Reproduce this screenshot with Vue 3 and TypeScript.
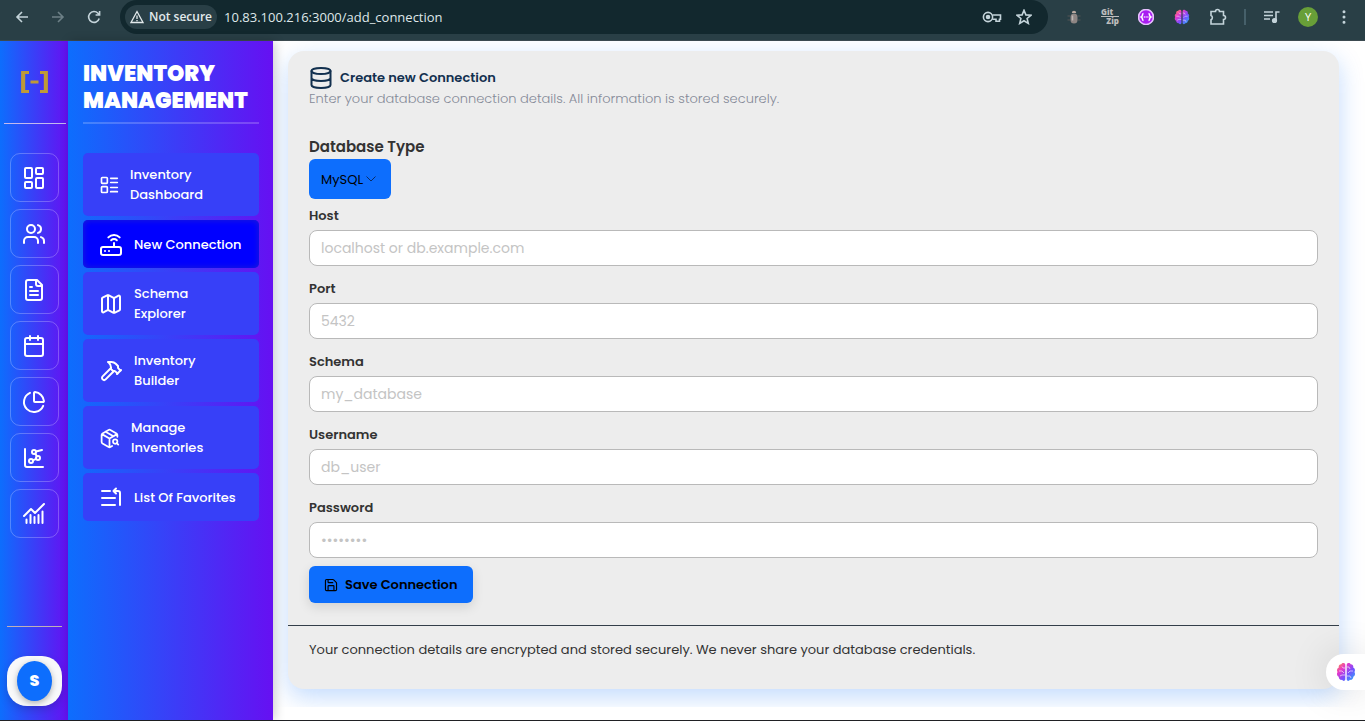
<script setup lang="ts">
import { ref } from 'vue'

interface NavItem {
  lines: string[]
  icon: string
  size: number
  active?: boolean
}

interface Field {
  id: string
  label: string
  placeholder: string
  type: string
}

const address = ref('10.83.100.216:3000/add_connection')
const dbType = ref('MySQL')

const rail: { label: string; icon: string }[] = [
  {
    label: 'Dashboard',
    icon: '<rect x="3" y="2" width="7" height="10" rx="1"/><rect x="14" y="2" width="7" height="6" rx="1"/><rect x="14" y="12" width="7" height="10" rx="1"/><rect x="3" y="16" width="7" height="6" rx="1"/>',
  },
  {
    label: 'Users',
    icon: '<path d="M16 21v-2a4 4 0 0 0-4-4H6a4 4 0 0 0-4 4v2"/><circle cx="9" cy="7" r="4"/><path d="M22 21v-2a4 4 0 0 0-3-3.87M16 3.13a4 4 0 0 1 0 7.75"/>',
  },
  {
    label: 'Documents',
    icon: '<path d="M15 2H6a2 2 0 0 0-2 2v16a2 2 0 0 0 2 2h12a2 2 0 0 0 2-2V7Z"/><path d="M14 2v4a2 2 0 0 0 2 2h4M10 9H8M16 13H8M16 17H8"/>',
  },
  {
    label: 'Calendar',
    icon: '<rect x="3" y="4" width="18" height="18" rx="2"/><path d="M16 2v4M8 2v4M3 10h18"/>',
  },
  {
    label: 'Reports',
    icon: '<path d="M21 12c.55 0 1-.45.95-1a10 10 0 0 0-8.95-8.95c-.55-.05-1 .4-1 .95v8a1 1 0 0 0 1 1z"/><path d="M21.2 15.9A10 10 0 1 1 8 2.83"/>',
  },
  {
    label: 'Network chart',
    icon: '<path d="M3 3v16a2 2 0 0 0 2 2h16"/><circle cx="12" cy="6" r="2"/><circle cx="16" cy="12" r="2"/><circle cx="9" cy="15" r="2"/><path d="m14 5.500 6-1.500M13.200 7.600l1.700 2.700M10.900 14.300l3.200-1.400"/>',
  },
  {
    label: 'Analytics',
    icon: '<path d="m2 14 7-7 4 4 9-9M4.500 21v-3.500M8.500 21v-8M12.500 21v-6M16.500 21v-8M20.500 21V9.500"/>',
  },
]

const nav: NavItem[] = [
  {
    lines: ['Inventory', 'Dashboard'],
    size: 20,
    icon: '<rect x="3" y="3" width="7" height="7" rx="1"/><rect x="3" y="14" width="7" height="7" rx="1"/><path d="M14 4h8M14 9h8M14 15h8M14 20h8"/>',
  },
  {
    lines: ['New Connection'],
    size: 24,
    active: true,
    icon: '<rect x="2" y="14" width="20" height="8" rx="2"/><path d="M6 18h.01M10 18h.01M15 10v4M17.84 7.17a4 4 0 0 0-5.66 0M20.66 4.34a8 8 0 0 0-11.31 0"/>',
  },
  {
    lines: ['Schema', 'Explorer'],
    size: 24,
    icon: '<path d="M14.1 5.55a2 2 0 0 0 1.8 0l3.65-1.83A1 1 0 0 1 21 4.62v12.76a1 1 0 0 1-.55.9l-4.55 2.27a2 2 0 0 1-1.8 0l-4.2-2.1a2 2 0 0 0-1.8 0l-3.65 1.83A1 1 0 0 1 3 19.38V6.62a1 1 0 0 1 .55-.9l4.55-2.27a2 2 0 0 1 1.8 0zM15 5.76v15M9 3.24v15"/>',
  },
  {
    lines: ['Inventory', 'Builder'],
    size: 24,
    icon: '<path d="m15 12-8.37 8.37a1 1 0 1 1-3-3L12 9"/><path d="m18 15 4-4"/><path d="m21.5 11.5-1.91-1.91A2 2 0 0 1 19 8.17V7l-2.26-2.26a6 6 0 0 0-4.2-1.76L9 2.96l.92.82A6.18 6.18 0 0 1 12 8.4V10l2 2h1.17a2 2 0 0 1 1.42.59L18.5 14.5"/>',
  },
  {
    lines: ['Manage', 'Inventories'],
    size: 21,
    icon: '<path d="M21 10V8a2 2 0 0 0-1-1.73l-7-4a2 2 0 0 0-2 0l-7 4A2 2 0 0 0 3 8v8a2 2 0 0 0 1 1.73l7 4a2 2 0 0 0 2 0l2-1.14M7.5 4.27l9 5.15M3.29 7 12 12l8.71-5M12 22V12"/><circle cx="18.5" cy="15.5" r="2.5"/><path d="M20.27 17.27 22 19"/>',
  },
  {
    lines: ['List Of Favorites'],
    size: 24,
    icon: '<path d="M3 5h8M3 12h13M3 19h13M21 19V7a2 2 0 0 0-2-2h-4M17 2.500l-2.500 2.500 2.500 2.500"/>',
  },
]

const fields: Field[] = [
  { id: 'host', label: 'Host', placeholder: 'localhost or db.example.com', type: 'text' },
  { id: 'port', label: 'Port', placeholder: '5432', type: 'text' },
  { id: 'schema', label: 'Schema', placeholder: 'my_database', type: 'text' },
  { id: 'username', label: 'Username', placeholder: 'db_user', type: 'text' },
  { id: 'password', label: 'Password', placeholder: '••••••••', type: 'password' },
]
</script>

<template>
  <div class="window">
    <svg class="defs" width="0" height="0" aria-hidden="true">
      <defs>
        <linearGradient id="brainFill" x1="0" y1="0" x2="1" y2="1">
          <stop offset="0" stop-color="#ff9a3c" />
          <stop offset="0.3" stop-color="#e838c8" />
          <stop offset="0.6" stop-color="#7a4dff" />
          <stop offset="1" stop-color="#22b4f5" />
        </linearGradient>
        <symbol id="brain" viewBox="0 0 20 20">
          <path
            fill="url(#brainFill)"
            d="M9.300 2.500C8.600.6 6 .6 5.300 2.300 3.300 2.300 2.300 4 2.800 5.600 1 6.500.5 8.500 1.500 10 .4 11.800 1 14 2.700 14.700 2.600 17 4.500 18.200 6 17.800 7 19.500 9 19.200 9.300 17.500Zm1.400 0C11.400.6 14 .6 14.700 2.300 16.700 2.300 17.700 4 17.200 5.600 19 6.500 19.500 8.500 18.500 10 19.600 11.800 19 14 17.300 14.700 17.400 17 15.500 18.200 14 17.800 13 19.500 11 19.200 10.700 17.500Z"
          />
          <path
            fill="none"
            stroke="#fff"
            stroke-opacity="0.6"
            stroke-width="1"
            d="M9 6H7L6 4.500M3 9h3l2 2M4 14l2-1h3M11 5h2l1 2M17 9h-3l-2 2M11 14h3l1 2"
          />
        </symbol>
      </defs>
    </svg>

    <header class="chrome">
      <button class="tool" aria-label="Back">
        <svg width="16" height="16" viewBox="0 0 16 16"><path d="M14 8H3M8 3 3 8l5 5" /></svg>
      </button>
      <button class="tool dim" aria-label="Forward">
        <svg width="16" height="16" viewBox="0 0 16 16"><path d="M2 8h11M8 3l5 5-5 5" /></svg>
      </button>
      <button class="tool" aria-label="Reload">
        <svg width="16" height="16" viewBox="0 0 16 16">
          <path d="M13.200 9.500A5.400 5.400 0 1 1 12 4.300l1.500 1.500M13.600 2v4H9.600" />
        </svg>
      </button>
      <div class="omnibox">
        <button class="insecure">
          <svg width="14" height="14" viewBox="0 0 14 14"><path d="M7 1.500 13 12.500H1ZM7 5.500v3.500M7 10v1.200" /></svg>
          Not secure
        </button>
        <input v-model="address" class="address" type="text" aria-label="Address" spellcheck="false" />
        <button class="tool" aria-label="Passwords">
          <svg width="20" height="14" viewBox="0 0 20 14">
            <circle cx="6" cy="7" r="4.600" />
            <circle cx="6" cy="7" r="1.500" fill="currentColor" />
            <path d="M10.500 5H18.500v4.200h-1v2h-3.500v-2h-3.700" />
          </svg>
        </button>
        <button class="tool" aria-label="Bookmark">
          <svg width="16" height="16" viewBox="0 0 16 16">
            <path d="m8 1.300 1.900 4.600 5 .4-3.800 3.200 1.200 4.900L8 11.800l-4.300 2.600 1.200-4.900L1.100 6.300l5-.4Z" />
          </svg>
        </button>
      </div>
      <div class="extensions">
        <button class="tool ext" aria-label="Debugger">
          <svg width="16" height="16" viewBox="0 0 16 16" class="solid">
            <path d="M5.800 4a2.200 2.200 0 0 1 4.400 0Z" fill="#b9a9a0" />
            <rect x="4.500" y="4.500" width="7" height="10" rx="3.500" fill="#8d8583" />
            <path d="M6.500 6.500v5" stroke="#bdb7b4" stroke-width="1.500" />
            <path d="M4 7H1.500M4 11H1.500M12 7h2.500M12 11h2.500" stroke="#454d50" />
          </svg>
        </button>
        <button class="gitzip" aria-label="GitZip"><span>Git</span><span class="zip">Zip</span></button>
        <button class="tool ext" aria-label="Code helper">
          <svg width="16" height="16" viewBox="0 0 16 16" class="solid">
            <circle cx="8" cy="8" r="7.500" fill="#a91df2" stroke="#e7c0ff" />
            <path
              d="M5.500 4.500C4 4.500 4.800 7.500 3.300 8 4.800 8.500 4 11.500 5.500 11.500M10.500 4.500C12 4.500 11.200 7.500 12.700 8 11.200 8.500 12 11.500 10.500 11.500M5.800 8h1M7.600 8h1M9.400 8h1"
              fill="none"
              stroke="#fff"
            />
          </svg>
        </button>
        <button class="tool ext" aria-label="Brain assistant">
          <svg width="16" height="16" class="solid"><use href="#brain" /></svg>
        </button>
        <button class="tool ext" aria-label="Extensions">
          <svg width="18" height="18" viewBox="0 0 18 18">
            <path d="M2 3.500h4.500a2 2 0 0 1 4 0h4V7.500a2 2 0 0 1 0 4v4.500H2v-4.200a2.300 2.300 0 0 0 0-4.200Z" />
          </svg>
        </button>
      </div>
      <div class="browser-menu">
        <span class="bar"></span>
        <button class="tool" aria-label="Media">
          <svg width="18" height="16" viewBox="0 0 18 16">
            <path d="M1 3h9M1 6.500h9M1 10h6M13 11.500V3h3.500" />
            <circle cx="11.500" cy="11.500" r="1.800" fill="currentColor" />
          </svg>
        </button>
        <button class="profile" aria-label="Profile">Y</button>
        <button class="tool more" aria-label="Menu">
          <svg width="4" height="16" viewBox="0 0 4 16" class="solid">
            <path
              fill="currentColor"
              d="M2 1.200a1.500 1.500 0 1 1 0 3 1.500 1.500 0 0 1 0-3Zm0 5.300a1.500 1.500 0 1 1 0 3 1.500 1.500 0 0 1 0-3Zm0 5.300a1.500 1.500 0 1 1 0 3 1.500 1.500 0 0 1 0-3Z"
            />
          </svg>
        </button>
      </div>
    </header>

    <div class="app">
      <nav class="rail" aria-label="Modules">
        <div class="logo">
          <svg width="30" height="22" viewBox="0 0 30 22" aria-hidden="true">
            <path d="M9 1.500H3v19h6M20 1.500h6v19h-6" fill="none" stroke="#bf9a38" stroke-width="3" />
            <path d="M3.200 0v22M25.800 0v22" stroke="#bf9a38" stroke-width="4" />
            <path d="M10.500 11h8" stroke="#bf9a38" stroke-width="3" />
          </svg>
        </div>
        <div class="rail-items">
          <button v-for="item in rail" :key="item.label" class="rail-btn" :aria-label="item.label">
            <svg class="line" width="24" height="24" viewBox="0 0 24 24" v-html="item.icon"></svg>
          </button>
        </div>
        <div class="account">
          <button class="avatar" aria-label="Account"><span>S</span></button>
        </div>
      </nav>

      <aside class="sidebar">
        <h1>INVENTORY MANAGEMENT</h1>
        <nav class="menu" aria-label="Inventory">
          <a v-for="item in nav" :key="item.icon" href="#" class="menu-item" :class="{ active: item.active }">
            <svg class="line" :width="item.size" :height="item.size" viewBox="0 0 24 24" v-html="item.icon"></svg>
            <span><span v-for="line in item.lines" :key="line" class="menu-line">{{ line }}</span></span>
          </a>
        </nav>
      </aside>

      <main class="main">
        <section class="card">
          <form class="form" @submit.prevent>
            <div class="title">
              <svg class="line" width="24" height="24" viewBox="0 0 24 24">
                <ellipse cx="12" cy="5" rx="9.500" ry="3" />
                <path d="M2.500 5v14c0 1.700 4.300 3 9.500 3s9.500-1.300 9.500-3V5M2.500 12c0 1.700 4.300 3 9.500 3s9.500-1.300 9.500-3" />
              </svg>
              <h2>Create new Connection</h2>
            </div>
            <p class="subtitle">Enter your database connection details. All information is stored securely.</p>

            <label class="type-label" for="dbtype">Database Type</label>
            <div class="select">
              <select id="dbtype" v-model="dbType">
                <option>MySQL</option>
              </select>
              <svg width="10" height="6" viewBox="0 0 10 6" aria-hidden="true"><path d="m.5.5 4.500 4.500L9.500.5" /></svg>
            </div>

            <div class="fields">
              <div v-for="field in fields" :key="field.id" class="field">
                <label :for="field.id">{{ field.label }}</label>
                <input :id="field.id" :type="field.type" :placeholder="field.placeholder" />
              </div>
            </div>

            <button type="submit" class="save">
              <svg class="line" width="14" height="14" viewBox="0 0 24 24">
                <path
                  d="M15.200 2.500a2 2 0 0 1 1.400.6l4.300 4.300a2 2 0 0 1 .6 1.400V19.500a2 2 0 0 1-2 2h-15a2 2 0 0 1-2-2v-15a2 2 0 0 1 2-2zM17 21.500V14a1 1 0 0 0-1-1H8a1 1 0 0 0-1 1v7.500M7 2.500V7a1 1 0 0 0 1 1h7"
                />
              </svg>
              Save Connection
            </button>
          </form>
          <footer class="note">
            Your connection details are encrypted and stored securely. We never share your database credentials.
          </footer>
        </section>
      </main>
    </div>

    <button class="assistant" aria-label="Open assistant">
      <svg width="20" height="20"><use href="#brain" /></svg>
    </button>
  </div>
</template>

<style>
body {
  margin: 0;
  background: #fff;
}
</style>

<style scoped>
* {
  box-sizing: border-box;
}

.window {
  display: flex;
  flex-direction: column;
  min-height: 100vh;
  border-bottom: 1px solid #202124;
  font-family: Poppins, Inter, 'Open Sans', sans-serif;
  font-size: 13px;
  color: #333;
}

button,
input,
select {
  font-family: inherit;
}

button {
  margin: 0;
  padding: 0;
  border: 0;
  background: none;
  color: inherit;
}

h1,
h2,
p {
  margin: 0;
}

.defs {
  position: absolute;
}

.line {
  flex: none;
  fill: none;
  stroke: currentColor;
  stroke-width: 2;
  stroke-linecap: round;
  stroke-linejoin: round;
}

.chrome {
  display: flex;
  align-items: center;
  height: 41px;
  padding: 0 19px 7px 14px;
  gap: 20px;
  background: #293f46;
  border-bottom: 1px solid #3c4a50;
  color: #c4d4da;
  font-family: 'Open Sans', sans-serif;
}

.tool {
  display: flex;
  justify-content: center;
}

.ext {
  width: 18px;
}

.tool svg {
  fill: none;
  stroke: currentColor;
  stroke-width: 1.600;
}

.tool svg.solid {
  stroke: none;
}

.dim {
  color: #6d8087;
}

.omnibox {
  display: flex;
  flex: 1;
  align-items: center;
  gap: 14px;
  height: 34px;
  margin-left: -2px;
  padding: 0 16px 0 5px;
  border-radius: 17px;
  background: #12282e;
}

.insecure {
  display: flex;
  flex: none;
  align-items: center;
  gap: 5px;
  height: 24px;
  padding: 0 5px;
  border-radius: 12px;
  background: #293f46;
  color: #e3eaec;
  font-size: 12px;
  font-weight: 600;
}

.insecure svg {
  fill: none;
  stroke: currentColor;
  stroke-width: 1.300;
}

.address {
  flex: 1;
  min-width: 0;
  margin-left: -7px;
  padding: 0;
  border: 0;
  outline: 0;
  background: none;
  color: #dfe7e9;
  font-size: 13px;
}

.extensions {
  display: flex;
  align-items: center;
  gap: 18px;
  margin: 0 -3px;
}

.gitzip {
  display: flex;
  flex-direction: column;
  width: 18px;
  color: #bcbcbc;
  font-size: 8px;
  font-weight: 800;
  line-height: 8px;
  text-align: left;
}

.zip {
  border-top: 1px solid #bcbcbc;
  text-align: right;
}

.browser-menu {
  display: flex;
  align-items: center;
  gap: 17px;
}

.bar {
  width: 2px;
  height: 16px;
  background: #46606a;
}

.profile {
  width: 20px;
  height: 20px;
  border-radius: 50%;
  background: #689f38;
  color: #fff;
  font-size: 11px;
}

.more {
  margin-left: 7px;
}

.app {
  display: flex;
  flex: 1;
}

.rail {
  display: flex;
  flex: none;
  flex-direction: column;
  width: 68px;
  background: linear-gradient(90deg, #0d6efd, #6610f2);
  color: #fff;
}

.logo {
  display: flex;
  align-items: center;
  justify-content: center;
  height: 83px;
  margin: 0 2px 0 4px;
  border-bottom: 1px solid #c3b9ee;
}

.rail-items {
  display: flex;
  flex-direction: column;
  align-items: center;
  gap: 7px;
  padding-top: 29px;
}

.rail-btn {
  display: flex;
  align-items: center;
  justify-content: center;
  width: 49px;
  height: 49px;
  border: 1px solid rgba(255, 255, 255, 0.25);
  border-radius: 10px;
}

.account {
  margin: auto 6px 14px 7px;
  padding-top: 29px;
  border-top: 1px solid #bfb0b8;
}

.avatar {
  display: flex;
  align-items: center;
  justify-content: center;
  width: 100%;
  height: 50px;
  border-radius: 20px;
  background: #f8f9fa;
  box-shadow: 0 4px 8px rgba(0, 0, 0, 0.15);
}

.avatar span {
  width: 35px;
  height: 40px;
  border-radius: 50%;
  background: #0d6efd;
  box-shadow: 0 2px 6px rgba(0, 0, 0, 0.3);
  color: #fff;
  font-size: 16px;
  font-weight: 800;
  line-height: 40px;
}

.sidebar {
  flex: none;
  width: 205px;
  padding: 19px 14px 0 15px;
  background: linear-gradient(90deg, #0d6efd, #6610f2);
  box-shadow: 2px 0 10px rgba(0, 0, 0, 0.2);
  color: #fff;
}

h1 {
  padding-bottom: 8px;
  border-bottom: 2px solid rgba(255, 255, 255, 0.2);
  font-size: 22px;
  font-weight: 900;
  line-height: 27px;
}

.menu {
  display: flex;
  flex-direction: column;
  gap: 4px;
  margin-top: 29px;
}

.menu-item {
  display: flex;
  align-items: center;
  gap: 11px;
  min-height: 48px;
  padding: 12px 16px 11px;
  border-radius: 5px;
  background: #3740f8;
  color: #fff;
  font-size: 13px;
  font-weight: 500;
  line-height: 20px;
  text-decoration: none;
  white-space: nowrap;
}

.menu-item.active {
  background: #00f;
  box-shadow: inset 0 0 6px #2020d0;
}

.menu-line {
  display: block;
}

.main {
  flex: 1;
  min-width: 0;
  margin-bottom: 13px;
  padding: 10px 26px 18px 15px;
  overflow: hidden;
}

.card {
  border-radius: 16px;
  background: #ededed;
  box-shadow: 0 8px 24px rgba(13, 110, 253, 0.25);
}

.form {
  padding: 15px 21px 22px;
}

.title {
  display: flex;
  align-items: center;
  gap: 7px;
  height: 23px;
  color: #12304f;
}

h2 {
  font-size: 13px;
  font-weight: 600;
}

.subtitle {
  color: #858a98;
  font-weight: 300;
  line-height: 20px;
}

.type-label {
  display: block;
  margin-top: 28px;
  font-size: 15px;
  font-weight: 600;
  line-height: 20px;
}

.select {
  display: grid;
  align-items: center;
  width: 82px;
  margin-top: 2px;
}

.select select,
.select svg {
  grid-area: 1 / 1;
}

.select select {
  width: 100%;
  height: 40px;
  padding: 0 12px;
  border: 0;
  border-radius: 6px;
  appearance: none;
  background: #0d6efd;
  color: #000;
  font-size: 13px;
}

.select svg {
  justify-self: end;
  margin-right: 15px;
  fill: none;
  stroke: #0a2c66;
  pointer-events: none;
}

.fields {
  display: grid;
  gap: 13px;
  margin-top: 7px;
}

.field label {
  display: block;
  margin-bottom: 4px;
  font-weight: 600;
  line-height: 20px;
}

.field input {
  display: block;
  width: 100%;
  height: 36px;
  padding: 0 11px;
  border: 1px solid #b9b9b9;
  border-radius: 8px;
  background: #fff;
  color: #333;
  font-size: 14px;
}

.field input::placeholder {
  color: #c4c4c4;
}

.save {
  display: flex;
  align-items: center;
  gap: 7px;
  height: 37px;
  margin-top: 8px;
  padding: 0 15px;
  border-radius: 6px;
  background: #0d6efd;
  box-shadow: 0 4px 12px rgba(0, 0, 0, 0.12);
  color: #000;
  font-size: 13px;
  font-weight: 600;
}

.note {
  padding: 14px 21px 29px;
  border-top: 1px solid #343f4a;
  line-height: 20px;
}

.assistant {
  position: fixed;
  right: 0;
  bottom: 31px;
  display: flex;
  align-items: center;
  width: 39px;
  height: 36px;
  padding-left: 10px;
  border-radius: 18px 0 0 18px;
  background: #fff;
  box-shadow: 0 0 40px rgba(0, 0, 0, 0.14);
}
</style>
